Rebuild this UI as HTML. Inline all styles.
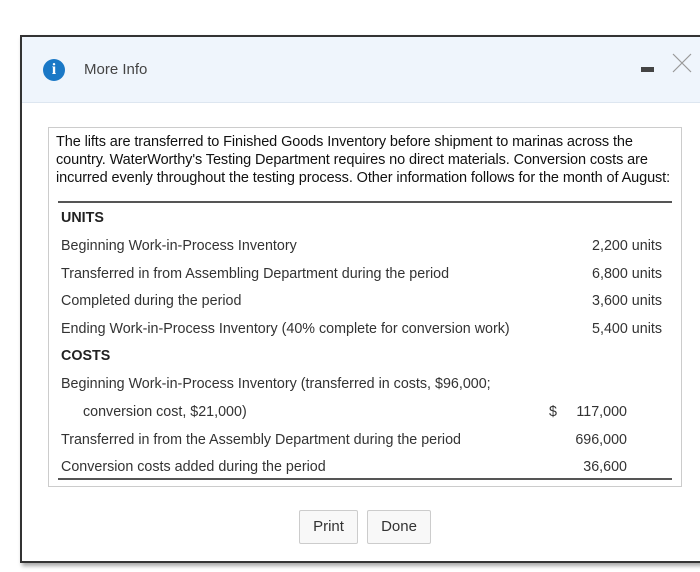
<!DOCTYPE html>
<html><head><style>
body{margin:0;width:700px;height:572px;background:#fff;position:relative;overflow:hidden;font-family:"Liberation Sans",sans-serif;color:#222}
.dlg{position:absolute;left:20px;top:35px;width:700px;height:524px;border:2px solid #333;border-right:none;background:#fff;box-shadow:2px 3px 4px rgba(0,0,0,.35)}
.hdr{position:absolute;left:0;top:0;right:0;height:65px;background:#eff5fc;border-bottom:1px solid #dde6f0}
.icon{position:absolute;left:21px;top:22px;width:22px;height:22px;border-radius:50%;background:#1a78c6;color:#fff;font:bold 16px "Liberation Serif",serif;text-align:center;line-height:22px}
.title{position:absolute;left:62px;top:24px;font-size:15px;color:#444}
.box{position:absolute;left:26px;top:90px;width:632px;height:358px;border:1px solid #ccc}
.para{position:absolute;left:7px;top:6px;font-size:14.5px;line-height:17.8px;color:#111;width:625px;letter-spacing:-0.1px}
.hr{position:absolute;left:9px;width:614px;height:2px;background:#555}
.r{position:absolute;font-size:14.3px;color:#333;white-space:nowrap}
.b{font-weight:bold;color:#222}
.btn{position:absolute;top:473px;height:32px;border:1px solid #ccc;border-radius:2px;background:#f8f8f8;font-size:15px;color:#333;text-align:center;line-height:32px}
</style></head><body>
<div class="dlg">
<div class="hdr"><div class="icon">i</div><div class="title">More Info</div>
<div style="position:absolute;left:619px;top:30px;width:13px;height:5px;background:#444"></div>
<svg style="position:absolute;left:650px;top:16px" width="20" height="20"><path d="M1 1L19 19M19 1L1 19" stroke="#999" stroke-width="1.2"/></svg>
</div>
<div class="box">
<div class="para">The lifts are transferred to Finished Goods Inventory before shipment to marinas across the country. WaterWorthy's Testing Department requires no direct materials. Conversion costs are incurred evenly throughout the testing process. Other information follows for the month of August:</div>
<div class="hr" style="top:73px"></div>
<div class="r b" style="left:12px;top:82px">UNITS</div>
<div class="r" style="left:12px;top:110px">Beginning Work-in-Process Inventory</div><div class="r" style="right:19px;top:110px">2,200 units</div>
<div class="r" style="left:12px;top:138px">Transferred in from Assembling Department during the period</div><div class="r" style="right:19px;top:138px">6,800 units</div>
<div class="r" style="left:12px;top:165px">Completed during the period</div><div class="r" style="right:19px;top:165px">3,600 units</div>
<div class="r" style="left:12px;top:193px">Ending Work-in-Process Inventory (40% complete for conversion work)</div><div class="r" style="right:19px;top:193px">5,400 units</div>
<div class="r b" style="left:12px;top:220px">COSTS</div>
<div class="r" style="left:12px;top:248px">Beginning Work-in-Process Inventory (transferred in costs, $96,000;</div>
<div class="r" style="left:34px;top:276px">conversion cost, $21,000)</div><div class="r" style="left:500px;top:276px">$</div><div class="r" style="right:54px;top:276px">117,000</div>
<div class="r" style="left:12px;top:304px">Transferred in from the Assembly Department during the period</div><div class="r" style="right:54px;top:304px">696,000</div>
<div class="r" style="left:12px;top:331px">Conversion costs added during the period</div><div class="r" style="right:54px;top:331px">36,600</div>
<div class="hr" style="top:350px"></div>
</div>
<div class="btn" style="left:277px;width:57px">Print</div>
<div class="btn" style="left:345px;width:62px">Done</div>
</div>
</body></html>
